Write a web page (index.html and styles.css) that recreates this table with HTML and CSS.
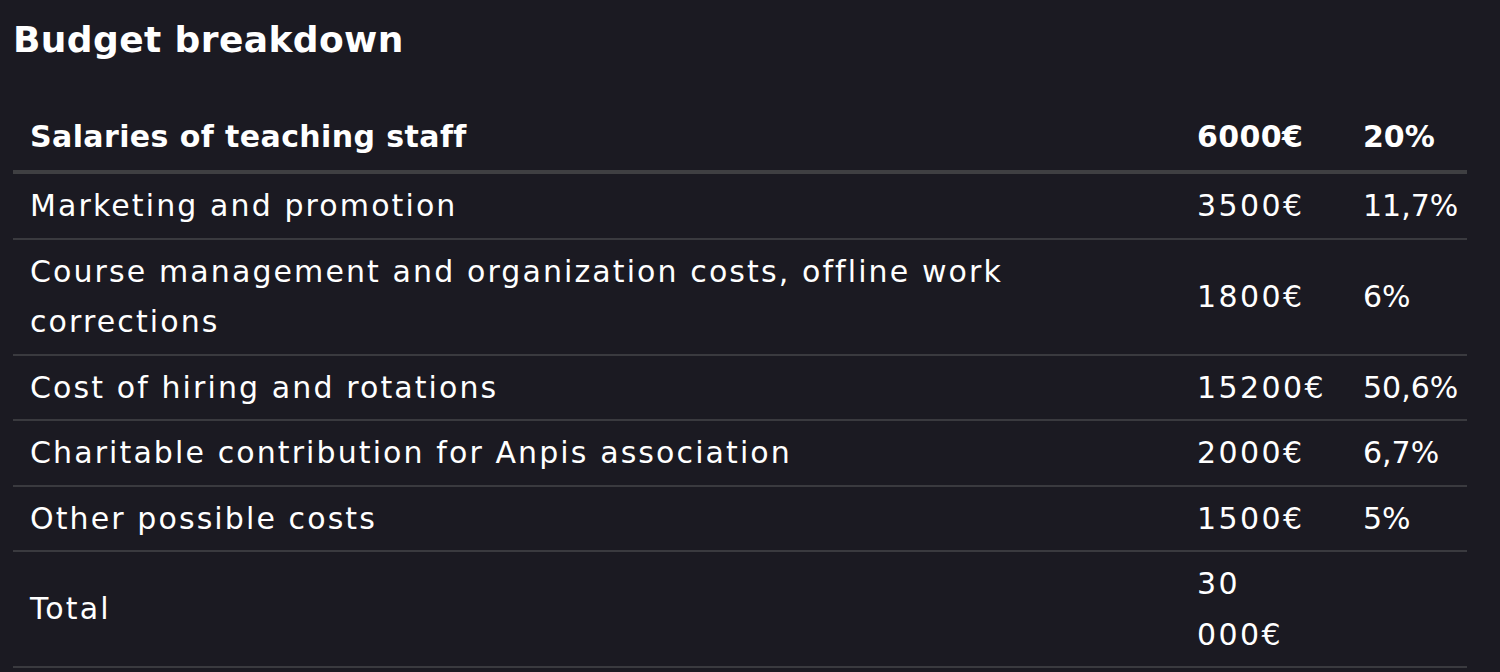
FILE: index.html
```html
<!DOCTYPE html>
<html lang="en">
<head>
<meta charset="utf-8">
<title>Budget breakdown</title>
<link rel="stylesheet" href="styles.css">
</head>
<body>
<section class="budget">
  <h2 class="budget-title">Budget breakdown</h2>
  <table class="budget-table">
    <colgroup>
      <col class="col-label">
      <col class="col-amount">
      <col class="col-share">
    </colgroup>
    <thead>
      <tr>
        <th>Salaries of teaching staff</th>
        <th>6000€</th>
        <th>20%</th>
      </tr>
    </thead>
    <tbody>
      <tr><td>Marketing and promotion</td><td>3500€</td><td>11,7%</td></tr>
      <tr><td>Course management and organization costs, offline work corrections</td><td>1800€</td><td>6%</td></tr>
      <tr><td>Cost of hiring and rotations</td><td>15200€</td><td>50,6%</td></tr>
      <tr><td>Charitable contribution for Anpis association</td><td>2000€</td><td>6,7%</td></tr>
      <tr><td>Other possible costs</td><td>1500€</td><td>5%</td></tr>
      <tr><td>Total</td><td>30 000€</td><td></td></tr>
    </tbody>
  </table>
</section>
</body>
</html>
```

FILE: styles.css
```css
html, body {
  margin: 0;
  padding: 0;
  background: #1b1a22;
  color: #ffffff;
  font-family: "DejaVu Sans", "Liberation Sans", sans-serif;
}

.budget {
  padding: 18px 13px 0 13px;
}

.budget-title {
  margin: 0 0 42px 0;
  font-size: 36px;
  line-height: 44px;
  font-weight: 700;
  letter-spacing: 0.4px;
}

.budget-table {
  width: 1454px;
  table-layout: fixed;
  border-collapse: collapse;
  font-size: 30px;
}

.col-label { width: 1167px; }
.col-amount { width: 166px; }
.col-share { width: 121px; }

.budget-table th {
  text-align: left;
  font-weight: 700;
  letter-spacing: 0.4px;
  line-height: 50px;
  padding: 8px 8px 8px 17px;
  border-bottom: 4px solid #3f3f42;
  vertical-align: middle;
  white-space: nowrap;
}

.budget-table th:last-child {
  letter-spacing: 0;
}

.budget-table td {
  font-weight: 400;
  letter-spacing: 2.1px;
  line-height: 50.5px;
  padding: 7px 14px 6px 17px;
  border-bottom: 2px solid #3a3a3f;
  vertical-align: middle;
}

.budget-table td:nth-child(2) {
  letter-spacing: 2.4px;
}

.budget-table td:last-child {
  padding-right: 4px;
  letter-spacing: 0;
  white-space: nowrap;
}
```
